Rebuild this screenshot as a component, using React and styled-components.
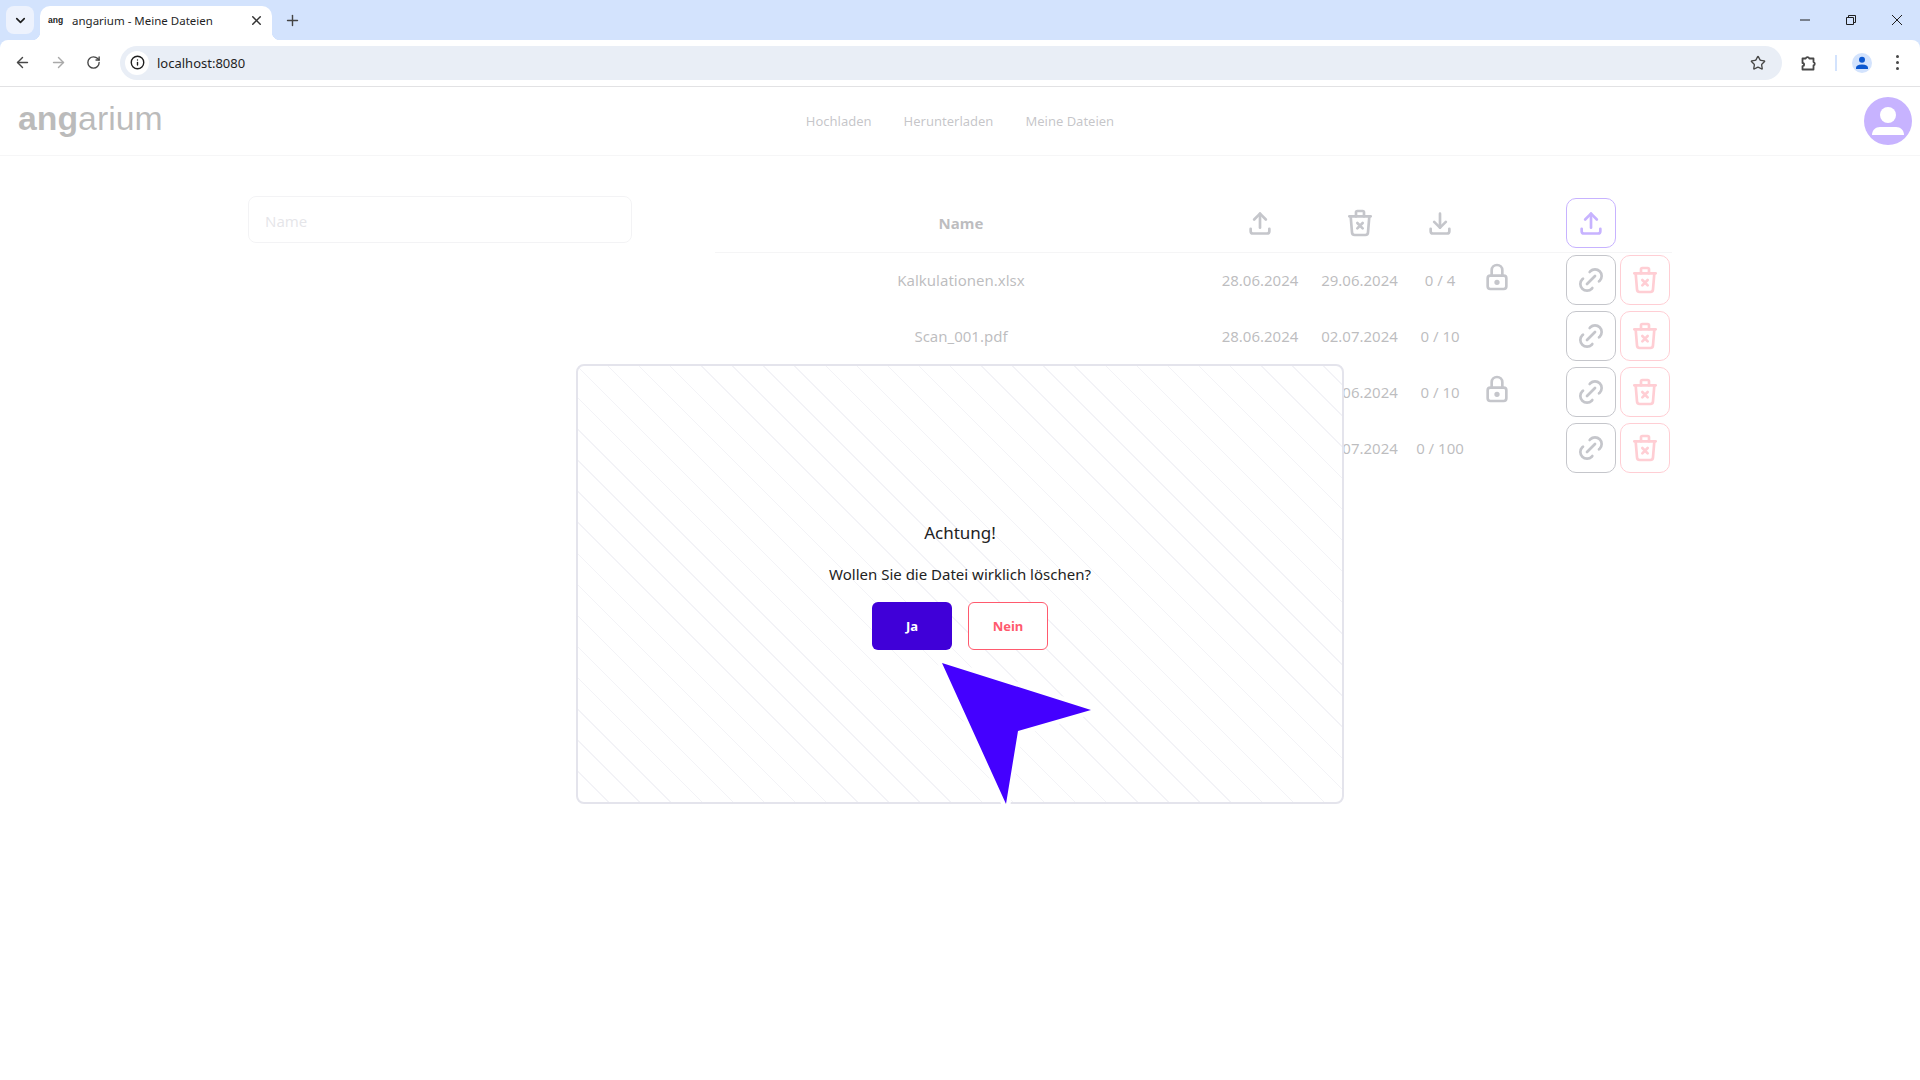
import React from "react";
import styled, { createGlobalStyle } from "styled-components";
import { TbUpload, TbDownload, TbTrashX, TbLock, TbLink } from "react-icons/tb";
import { ArrowLeft, ArrowRight, RotateCw, Star, Info, X, Plus, ChevronDown } from "lucide-react";

const GlobalStyle = createGlobalStyle`
  html, body {
    margin: 0;
    padding: 0;
    background: #fff;
    font-family: "Noto Sans", "Liberation Sans", sans-serif;
  }
  * { box-sizing: border-box; }
`;

const files = [
  { name: "Kalkulationen.xlsx", uploaded: "28.06.2024", deleted: "29.06.2024", downloads: "0 / 4", locked: true },
  { name: "Scan_001.pdf", uploaded: "28.06.2024", deleted: "02.07.2024", downloads: "0 / 10", locked: false },
  { name: "Bericht.docx", uploaded: "28.06.2024", deleted: "30.06.2024", downloads: "0 / 10", locked: true },
  { name: "Archiv.zip", uploaded: "28.06.2024", deleted: "05.07.2024", downloads: "0 / 100", locked: false },
];

function Browser() {
  return (
    <BrowserFrame>
      <TabStrip>
        <TabSearch><ChevronDown size={15} strokeWidth={2.6} color="#1f1f1f" /></TabSearch>
        <Tab>
          <Favicon>ang</Favicon>
          <TabTitle>angarium - Meine Dateien</TabTitle>
          <X size={15} strokeWidth={2.4} color="#333" />
        </Tab>
        <NewTab><Plus size={17} strokeWidth={2} color="#444" /></NewTab>
        <WindowControls>
          <svg width="12" height="12" viewBox="0 0 12 12"><path d="M1 6h10" stroke="#1f1f1f" fill="none" /></svg>
          <svg width="12" height="12" viewBox="0 0 12 12"><path d="M1.5 3.5h7v7h-7zM3.5 3.5v-2h7v7h-2" stroke="#1f1f1f" fill="none" /></svg>
          <svg width="12" height="12" viewBox="0 0 12 12"><path d="M1 1l10 10M11 1L1 11" stroke="#1f1f1f" fill="none" /></svg>
        </WindowControls>
      </TabStrip>
      <Toolbar>
        <NavIcons>
          <ArrowLeft size={17} strokeWidth={2} color="#474747" />
          <ArrowRight size={17} strokeWidth={2} color="#a9a9a9" />
          <RotateCw size={15} strokeWidth={2.2} color="#474747" />
        </NavIcons>
        <AddressBar>
          <SiteInfo><Info size={15} strokeWidth={2.2} color="#1f1f1f" /></SiteInfo>
          <Url>localhost:8080</Url>
          <Star size={16} strokeWidth={2} color="#474747" />
        </AddressBar>
        <ToolbarRight>
          <svg width="18" height="18" viewBox="0 0 18 18">
            <path
              d="M2.5 4.5h3.2a1.9 1.9 0 0 1 3.6 0h4.2v3.6a1.7 1.7 0 0 1 0 3.3v4.1H2.5v-3.3a1.6 1.6 0 0 0 0-3.2z"
              fill="none"
              stroke="#474747"
              strokeWidth="1.8"
              strokeLinejoin="round"
            />
          </svg>
          <ToolbarDivider />
          <ProfileChip>
            <svg width="14" height="14" viewBox="0 0 14 14">
              <circle cx="7" cy="3.8" r="3" fill="#0b57d0" />
              <path d="M1 13v-1.4C1 9.7 3 8.4 7 8.4s6 1.3 6 3.2V13z" fill="#0b57d0" />
            </svg>
          </ProfileChip>
          <Kebab><i /><i /><i /></Kebab>
        </ToolbarRight>
      </Toolbar>
    </BrowserFrame>
  );
}

function FileRow({ file }) {
  return (
    <Row>
      <Cell>{file.name}</Cell>
      <Cell>{file.uploaded}</Cell>
      <Cell>{file.deleted}</Cell>
      <Cell>{file.downloads}</Cell>
      <LockCell>{file.locked && <TbLock size={32} />}</LockCell>
      <Actions>
        <IconButton $tone="gray"><TbLink size={32} /></IconButton>
        <IconButton $tone="red"><TbTrashX size={32} /></IconButton>
      </Actions>
    </Row>
  );
}

export default function App() {
  return (
    <>
      <GlobalStyle />
      <Browser />
      <Page>
        <Header>
          <Logo><b>ang</b>arium</Logo>
          <Nav>
            <NavLink>Hochladen</NavLink>
            <NavLink>Herunterladen</NavLink>
            <NavLink>Meine Dateien</NavLink>
          </Nav>
          <Avatar>
            <svg width="48" height="48" viewBox="0 0 48 48">
              <circle cx="24" cy="24" r="24" fill="#4400ff" />
              <circle cx="24" cy="18" r="8" fill="#fff" />
              <path d="M8 38c0-5 3.5-8 8-8h16c4.5 0 8 3 8 8z" fill="#fff" />
            </svg>
          </Avatar>
        </Header>
        <Main>
          <SearchInput placeholder="Name" />
          <Table>
            <HeaderRow>
              <HeaderName>Name</HeaderName>
              <Cell><TbUpload size={28} strokeWidth={2.3} /></Cell>
              <Cell><TbTrashX size={32} /></Cell>
              <Cell><TbDownload size={28} strokeWidth={2.3} /></Cell>
              <LockCell />
              <Actions>
                <IconButton $tone="purple"><TbUpload size={28} strokeWidth={2.3} /></IconButton>
              </Actions>
            </HeaderRow>
            {files.map((file) => (
              <FileRow key={file.name} file={file} />
            ))}
          </Table>
        </Main>
        <Overlay>
          <Modal>
            <ModalTitle>Achtung!</ModalTitle>
            <ModalText>Wollen Sie die Datei wirklich löschen?</ModalText>
            <ModalButtons>
              <ConfirmButton>Ja</ConfirmButton>
              <CancelButton>Nein</CancelButton>
            </ModalButtons>
            <Pointer width="150" height="142" viewBox="0 0 150 142">
              <polygon
                points="0,0 149,47 76,68 64,141"
                fill="#4400ff"
                stroke="#fff"
                strokeWidth="9"
                strokeLinejoin="round"
                paintOrder="stroke"
              />
            </Pointer>
          </Modal>
        </Overlay>
      </Page>
    </>
  );
}

const BrowserFrame = styled.div`
  height: 87px;
  background: #d3e3fd;
  font-family: "Noto Sans", "Open Sans", sans-serif;
`;

const TabStrip = styled.div`
  height: 40px;
  display: flex;
  align-items: flex-end;
  padding-left: 6px;
`;

const TabSearch = styled.div`
  width: 28px;
  height: 28px;
  margin-bottom: 6px;
  border-radius: 8px;
  background: #edf2fd;
  display: flex;
  align-items: center;
  justify-content: center;
`;

const Tab = styled.div`
  position: relative;
  width: 232px;
  height: 34px;
  margin-left: 6px;
  padding: 0 8px 6px 8px;
  background: #fff;
  border-radius: 10px 10px 0 0;
  display: flex;
  align-items: center;

  &::before,
  &::after {
    content: "";
    position: absolute;
    bottom: 0;
    width: 8px;
    height: 8px;
  }
  &::before {
    left: -8px;
    background: radial-gradient(circle at 0 0, transparent 8px, #fff 8.5px);
  }
  &::after {
    right: -8px;
    background: radial-gradient(circle at 100% 0, transparent 8px, #fff 8.5px);
  }
`;

const Favicon = styled.span`
  width: 24px;
  font: bold 8.5px "Liberation Sans", sans-serif;
  color: #222;
`;

const TabTitle = styled.span`
  flex: 1;
  font-size: 11.5px;
  color: #1f1f1f;
`;

const NewTab = styled.div`
  width: 28px;
  height: 28px;
  margin: 0 0 6px 6px;
  display: flex;
  align-items: center;
  justify-content: center;
`;

const WindowControls = styled.div`
  margin-left: auto;
  height: 40px;
  width: 138px;
  padding: 0 17px 0 17px;
  display: flex;
  align-items: center;
  justify-content: space-between;
`;

const Toolbar = styled.div`
  height: 47px;
  background: #fff;
  border-radius: 8px 8px 0 0;
  border-bottom: 1px solid #e2e2e4;
  display: flex;
  align-items: center;
  padding: 0 14px 1px 14px;
`;

const NavIcons = styled.div`
  width: 106px;
  display: flex;
  align-items: center;
  gap: 19px;
`;

const AddressBar = styled.div`
  width: 1662px;
  height: 34px;
  border-radius: 17px;
  background: #e9eef6;
  display: flex;
  align-items: center;
  padding: 0 16px 0 5px;
`;

const SiteInfo = styled.div`
  width: 24px;
  height: 24px;
  border-radius: 50%;
  background: #fff;
  display: flex;
  align-items: center;
  justify-content: center;
`;

const Url = styled.span`
  flex: 1;
  margin-left: 8px;
  font-size: 13px;
  color: #1f1f1f;
`;

const ToolbarRight = styled.div`
  flex: 1;
  display: flex;
  align-items: center;
  padding-left: 18px;
`;

const ToolbarDivider = styled.div`
  width: 2px;
  height: 16px;
  margin: 0 15px 0 17px;
  background: #d3e3fd;
`;

const ProfileChip = styled.div`
  width: 20px;
  height: 20px;
  border-radius: 50%;
  background: #d3e3fd;
  display: flex;
  align-items: center;
  justify-content: center;
`;

const Kebab = styled.div`
  margin-left: 24px;
  display: flex;
  flex-direction: column;
  gap: 3px;

  i {
    display: block;
    width: 3px;
    height: 3px;
    border-radius: 50%;
    background: #474747;
  }
`;

const Page = styled.div`
  position: relative;
  height: 993px;
  overflow: hidden;
  background: #fff;
`;

const Header = styled.header`
  height: 69px;
  border-bottom: 1px solid #e0e0e4;
  display: grid;
  grid-template-columns: 1fr auto 1fr;
  align-items: center;
  padding: 0 8px;
`;

const Logo = styled.div`
  margin: -5px 0 0 10px;
  font: 33.8px "Liberation Sans", Arial, sans-serif;
  color: #1c1c1c;

  b {
    font-weight: 700;
  }
`;

const Nav = styled.nav`
  display: flex;
  gap: 32px;
  margin-top: -1px;
`;

const NavLink = styled.a`
  font-size: 13px;
  color: #40404c;
`;

const Avatar = styled.div`
  justify-self: end;
  width: 48px;
  height: 48px;

  svg {
    display: block;
  }
`;

const Main = styled.main`
  display: flex;
  align-items: flex-start;
  padding: 40px 0 0 248px;
`;

const SearchInput = styled.input`
  width: 384px;
  height: 47px;
  padding: 3px 17px 0 16px;
  border: 1px solid #d8d8de;
  border-radius: 8px;
  background: #fff;
  font: 15px "Noto Sans", sans-serif;
  outline: none;

  &::placeholder {
    color: #a9a9b5;
  }
`;

const Table = styled.section`
  width: 957px;
  margin: 2px 0 0 83px;
`;

const Row = styled.div`
  display: grid;
  grid-template-columns: 492px 106px 93px 68px 46px 1fr;
  align-items: center;
  height: 56px;
  padding: 2px 0 4px;
`;

const HeaderRow = styled(Row)`
  height: 55px;
  padding: 0 0 4px;
  border-bottom: 1px solid #dcdce0;
`;

const Cell = styled.div`
  font-size: 15px;
  text-align: center;
  display: flex;
  align-items: center;
  justify-content: center;
  color: #23232b;

  svg {
    color: #3c4052;
  }
`;

const HeaderName = styled(Cell)`
  font-weight: 700;
`;

const LockCell = styled(Cell)`
  margin-top: -6px;
`;

const Actions = styled.div`
  display: flex;
  gap: 4px;
  padding-left: 46px;
`;

const toneColor = {
  gray: "#3c4052",
  red: "#ff5a6e",
  purple: "#4400ff",
};

const IconButton = styled.button`
  width: 50px;
  height: 50px;
  padding: 0;
  border-radius: 10px;
  background: #fff;
  border: 1px solid ${(p) => toneColor[p.$tone]};
  color: ${(p) => toneColor[p.$tone]};
  display: flex;
  align-items: center;
  justify-content: center;
`;

const Overlay = styled.div`
  position: absolute;
  inset: 0;
  background: rgba(255, 255, 255, 0.7);
  display: flex;
  align-items: center;
  justify-content: center;
`;

const Modal = styled.div`
  position: relative;
  width: 768px;
  height: 440px;
  padding-top: 4px;
  border: 2px solid #e4e4ec;
  border-radius: 8px;
  background: repeating-linear-gradient(45deg, #fff 0 21px, #f3f3f7 21px 22px);
  display: flex;
  flex-direction: column;
  align-items: center;
  justify-content: center;
`;

const ModalTitle = styled.div`
  font-size: 17px;
  line-height: 24px;
  color: #222;
`;

const ModalText = styled.div`
  margin-top: 17px;
  font-size: 15px;
  line-height: 24px;
  color: #222;
`;

const ModalButtons = styled.div`
  display: flex;
  gap: 16px;
  margin-top: 16px;
`;

const ConfirmButton = styled.button`
  width: 80px;
  height: 48px;
  border: none;
  border-radius: 6px;
  background: #4000d8;
  color: #fff;
  font: 700 13px "Noto Sans", sans-serif;
`;

const CancelButton = styled.button`
  width: 80px;
  height: 48px;
  border: 1px solid #ff5a6e;
  border-radius: 6px;
  background: #fff;
  color: #ff5a6e;
  font: 700 13px "Noto Sans", sans-serif;
`;

const Pointer = styled.svg`
  position: absolute;
  left: 364px;
  top: 297px;
  overflow: visible;
`;
